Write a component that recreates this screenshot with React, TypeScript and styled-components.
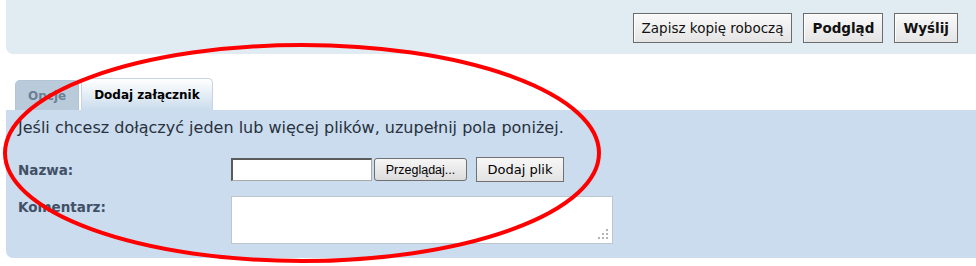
import styled, { createGlobalStyle } from "styled-components";

const Global = createGlobalStyle`
  html, body {
    margin: 0;
    padding: 0;
    background: #ffffff;
  }
  body {
    font-family: "DejaVu Sans", Verdana, sans-serif;
    width: 976px;
    height: 266px;
    overflow: hidden;
  }
`;

const Page = styled.div`
  position: relative;
  width: 976px;
  height: 266px;
  padding-left: 6px;
  box-sizing: border-box;
`;

const TopBar = styled.div`
  height: 54px;
  background: #e1ebf2;
  border-bottom-left-radius: 7px;
  display: flex;
  justify-content: flex-end;
  align-items: flex-start;
  gap: 11px;
  padding: 13px 18px 0 0;
  box-sizing: border-box;
`;

const ActionButton = styled.button<{ $bold?: boolean }>`
  height: 30px;
  padding: 0 8px;
  font-family: "DejaVu Sans", Verdana, sans-serif;
  font-size: 13.5px;
  font-weight: ${(p) => (p.$bold ? "bold" : "normal")};
  color: #111;
  background: linear-gradient(#fafafa, #e4e4e4);
  border: 1px solid #6b6b6b;
  box-shadow: inset 1px 1px 0 #fff;
  cursor: pointer;
`;

const Tabs = styled.div`
  display: flex;
  align-items: flex-end;
  gap: 2px;
  margin: 24px 0 0 9px;
  height: 32px;
`;

const Tab = styled.div<{ $active?: boolean }>`
  height: ${(p) => (p.$active ? "32px" : "30px")};
  padding: 0 12px;
  display: flex;
  align-items: center;
  font-size: 12px;
  font-weight: bold;
  box-sizing: border-box;
  border-radius: 5px 5px 0 0;
  color: ${(p) => (p.$active ? "#000" : "#6b7f96")};
  background: ${(p) =>
    p.$active ? "linear-gradient(#ffffff, #cadced)" : "#b9cbdb"};
  border: 1px solid ${(p) => (p.$active ? "#c6d3e0" : "#b3c4d4")};
  border-bottom: none;
`;

const Panel = styled.div`
  background: #cadced;
  height: 148px;
  border-radius: 0 0 0 7px;
  padding: 8px 12px;
  box-sizing: border-box;
  color: #333e4d;
`;

const Intro = styled.p`
  margin: 0 0 19px 0;
  font-size: 16px;
  line-height: 20px;
  color: #28313d;
`;

const Row = styled.div<{ $top?: boolean }>`
  display: flex;
  align-items: ${(p) => (p.$top ? "flex-start" : "center")};
  margin-bottom: 14px;
`;

const Label = styled.label`
  width: 213px;
  font-size: 13.5px;
  font-weight: bold;
  color: #425067;
  padding-top: ${(p) => (p.htmlFor === "comment" ? "3px" : "0")};
`;

const FileBox = styled.div`
  width: 141px;
  height: 23px;
  background: #fff;
  border: 1px solid #a9a9a9;
  border-top: 2px solid #5b5b5b;
  border-left: 2px solid #5b5b5b;
  box-sizing: border-box;
`;

const BrowseButton = styled.button`
  margin-left: 2px;
  height: 23px;
  width: 93px;
  font-family: "Liberation Sans", Arial, sans-serif;
  font-size: 12.5px;
  background: linear-gradient(#f6f6f6, #dcdcdc);
  border: 1px solid #707070;
  border-radius: 3px;
  color: #000;
  padding: 0;
`;

const AddButton = styled.button`
  margin-left: 9px;
  height: 25px;
  width: 88px;
  font-family: "DejaVu Sans", Verdana, sans-serif;
  font-size: 13px;
  background: linear-gradient(#f7f7f7, #e3e3e3);
  border: 1px solid #707070;
  color: #000;
  padding: 0;
`;

const Comment = styled.div`
  position: relative;
  width: 382px;
  height: 48px;
  background: #fff;
  border: 1px solid #bcc6cf;
  box-sizing: border-box;
`;

const Grip = styled.svg`
  position: absolute;
  right: 3px;
  bottom: 3px;
`;

const Annotation = styled.svg`
  position: absolute;
  left: 0;
  top: 0;
  pointer-events: none;
`;

export default function App() {
  return (
    <>
      <Global />
      <Page>
        <TopBar>
          <ActionButton>Zapisz kopię roboczą</ActionButton>
          <ActionButton $bold>Podgląd</ActionButton>
          <ActionButton $bold>Wyślij</ActionButton>
        </TopBar>
        <Tabs>
          <Tab>Opcje</Tab>
          <Tab $active>Dodaj załącznik</Tab>
        </Tabs>
        <Panel>
          <Intro>Jeśli chcesz dołączyć jeden lub więcej plików, uzupełnij pola poniżej.</Intro>
          <Row>
            <Label htmlFor="file">Nazwa:</Label>
            <FileBox />
            <BrowseButton>Przeglądaj...</BrowseButton>
            <AddButton>Dodaj plik</AddButton>
          </Row>
          <Row $top>
            <Label htmlFor="comment">Komentarz:</Label>
            <Comment>
              <Grip width="12" height="12" viewBox="0 0 12 12">
                <g fill="#b5b5b5">
                  <rect x="9" y="1" width="2" height="2" />
                  <rect x="5" y="5" width="2" height="2" />
                  <rect x="9" y="5" width="2" height="2" />
                  <rect x="1" y="9" width="2" height="2" />
                  <rect x="5" y="9" width="2" height="2" />
                  <rect x="9" y="9" width="2" height="2" />
                </g>
              </Grip>
            </Comment>
          </Row>
        </Panel>
        <Annotation width="976" height="266">
          <ellipse
            cx="302"
            cy="153"
            rx="297"
            ry="108"
            fill="none"
            stroke="#ff0000"
            strokeWidth="4"
          />
        </Annotation>
      </Page>
    </>
  );
}
